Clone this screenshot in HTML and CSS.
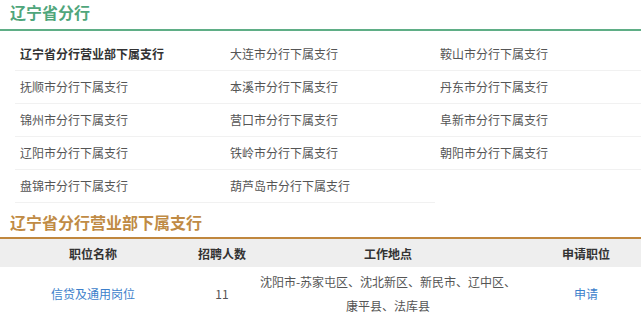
FILE: index.html
```html
<!DOCTYPE html>
<html lang="zh-CN">

<head>
    <meta charset="UTF-8">
    <meta name="viewport" content="width=device-width, initial-scale=1.0">
    <title>辽宁省分行</title>
    <link rel="stylesheet" href="styles.css">
</head>

<body>
    <div class="page">
        <h2 class="branch-title">辽宁省分行</h2>
        <ul class="branch-list">
            <li class="branch-item active">辽宁省分行营业部下属支行</li>
            <li class="branch-item">大连市分行下属支行</li>
            <li class="branch-item">鞍山市分行下属支行</li>
            <li class="branch-item">抚顺市分行下属支行</li>
            <li class="branch-item">本溪市分行下属支行</li>
            <li class="branch-item">丹东市分行下属支行</li>
            <li class="branch-item">锦州市分行下属支行</li>
            <li class="branch-item">营口市分行下属支行</li>
            <li class="branch-item">阜新市分行下属支行</li>
            <li class="branch-item">辽阳市分行下属支行</li>
            <li class="branch-item">铁岭市分行下属支行</li>
            <li class="branch-item">朝阳市分行下属支行</li>
            <li class="branch-item">盘锦市分行下属支行</li>
            <li class="branch-item">葫芦岛市分行下属支行</li>
        </ul>

        <h3 class="sub-title">辽宁省分行营业部下属支行</h3>
        <table class="job-table">
            <thead>
                <tr>
                    <th class="col-name">职位名称</th>
                    <th class="col-count">招聘人数</th>
                    <th class="col-place">工作地点</th>
                    <th class="col-apply">申请职位</th>
                </tr>
            </thead>
            <tbody>
                <tr>
                    <td><a class="link" href="#">信贷及通用岗位</a></td>
                    <td>11</td>
                    <td class="place">沈阳市-苏家屯区、沈北新区、新民市、辽中区、<br>康平县、法库县</td>
                    <td><a class="link" href="#">申请</a></td>
                </tr>
            </tbody>
        </table>
    </div>
</body>

</html>
```

FILE: styles.css
```css
html,
body {
    margin: 0;
    overflow: hidden;
}

body {
    background-color: #fff;
    font-family: "Microsoft YaHei", "Noto Sans CJK SC", sans-serif;
    font-size: 12px;
    color: #555;
}

.page {
    width: 654px;
}

.branch-title {
    margin: 0;
    padding-left: 10px;
    height: 29px;
    line-height: 25px;
    font-size: 16px;
    font-weight: bold;
    color: #4fa67b;
    border-bottom: 2px solid #5fae86;
}

.branch-list {
    list-style: none;
    margin: 7px 0 0;
    padding: 0 0 0 15px;
    display: grid;
    grid-template-columns: repeat(3, 210px);
}

.branch-item {
    height: 32px;
    line-height: 32px;
    padding-left: 5px;
    border-bottom: 1px solid #f1f1f1;
    color: #555;
}

.branch-item.active {
    font-weight: bold;
    color: #333;
}

.sub-title {
    margin: 0;
    padding: 7px 0 3px 10px;
    line-height: 24px;
    font-size: 16px;
    font-weight: bold;
    color: #c08b45;
    border-bottom: 2px solid #c0873e;
}

.job-table {
    width: 654px;
    border-collapse: collapse;
    table-layout: fixed;
}

.job-table th {
    height: 28px;
    padding: 0;
    background-color: #eeeeee;
    font-weight: bold;
    color: #333;
    text-align: center;
}

.job-table td {
    padding: 3px 0;
    line-height: 24px;
    text-align: center;
    color: #555;
}

.job-table td.place {
    white-space: nowrap;
}

.col-name {
    width: 186px;
}

.col-count {
    width: 72px;
}

.col-place {
    width: 260px;
}

.col-apply {
    width: 136px;
}

.link {
    color: #3d7fcb;
    text-decoration: none;
}
```
